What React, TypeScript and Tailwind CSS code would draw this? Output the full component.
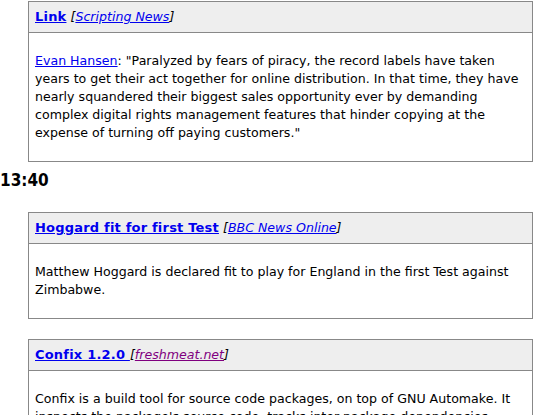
function Item({
  title,
  source,
  visited,
  children,
}: {
  title: string;
  source: string;
  visited?: boolean;
  children: React.ReactNode;
}) {
  return (
    <div className="ml-[28px] w-[505px] border border-[#888888]">
      <div className="bg-[#eeeeee] border-b border-[#888888] px-[6px] py-[6px] leading-[18px]">
        <a href="#" className="font-bold text-[13px] tracking-[0.2px] text-[#0000ee] underline">
          {title}
        </a>{" "}
        <i>
          [
          <a
            href="#"
            className={visited ? "text-[#800080] underline" : "text-[#0000ee] underline"}
          >
            {source}
          </a>
          ]
        </i>
      </div>
      <div className="px-[6px] pt-[19px] pb-[19px] leading-[18px]">{children}</div>
    </div>
  );
}

export default function App() {
  return (
    <div
      className="h-[415px] overflow-hidden bg-white text-[12.6px] text-black pt-px"
      style={{ fontFamily: '"DejaVu Sans", sans-serif' }}
    >
      <Item title="Link" source="Scripting News">
        <a href="#" className="text-[#0000ee] underline">
          Evan Hansen
        </a>
        : "Paralyzed by fears of piracy, the record labels have taken years to
        get their act together for online distribution. In that time, they have
        nearly squandered their biggest sales opportunity ever by demanding
        complex digital rights management features that hinder copying at the
        expense of turning off paying customers."
      </Item>
      <h3
        className="font-bold text-[17px] leading-[20px] mt-[8px] mb-[22px]"
        style={{ fontFamily: '"DejaVu Sans Condensed", "DejaVu Sans", sans-serif' }}
      >
        13:40
      </h3>
      <Item title="Hoggard fit for first Test" source="BBC News Online">
        Matthew Hoggard is declared fit to play for England in the first Test
        against Zimbabwe.
      </Item>
      <div className="h-[20px]" />
      <Item title="Confix 1.2.0 " source="freshmeat.net" visited>
        Confix is a build tool for source code packages, on top of GNU Automake.
        It inspects the package's source code, tracks inter-package dependencies,
        automatically generates Automake input files.
      </Item>
    </div>
  );
}
